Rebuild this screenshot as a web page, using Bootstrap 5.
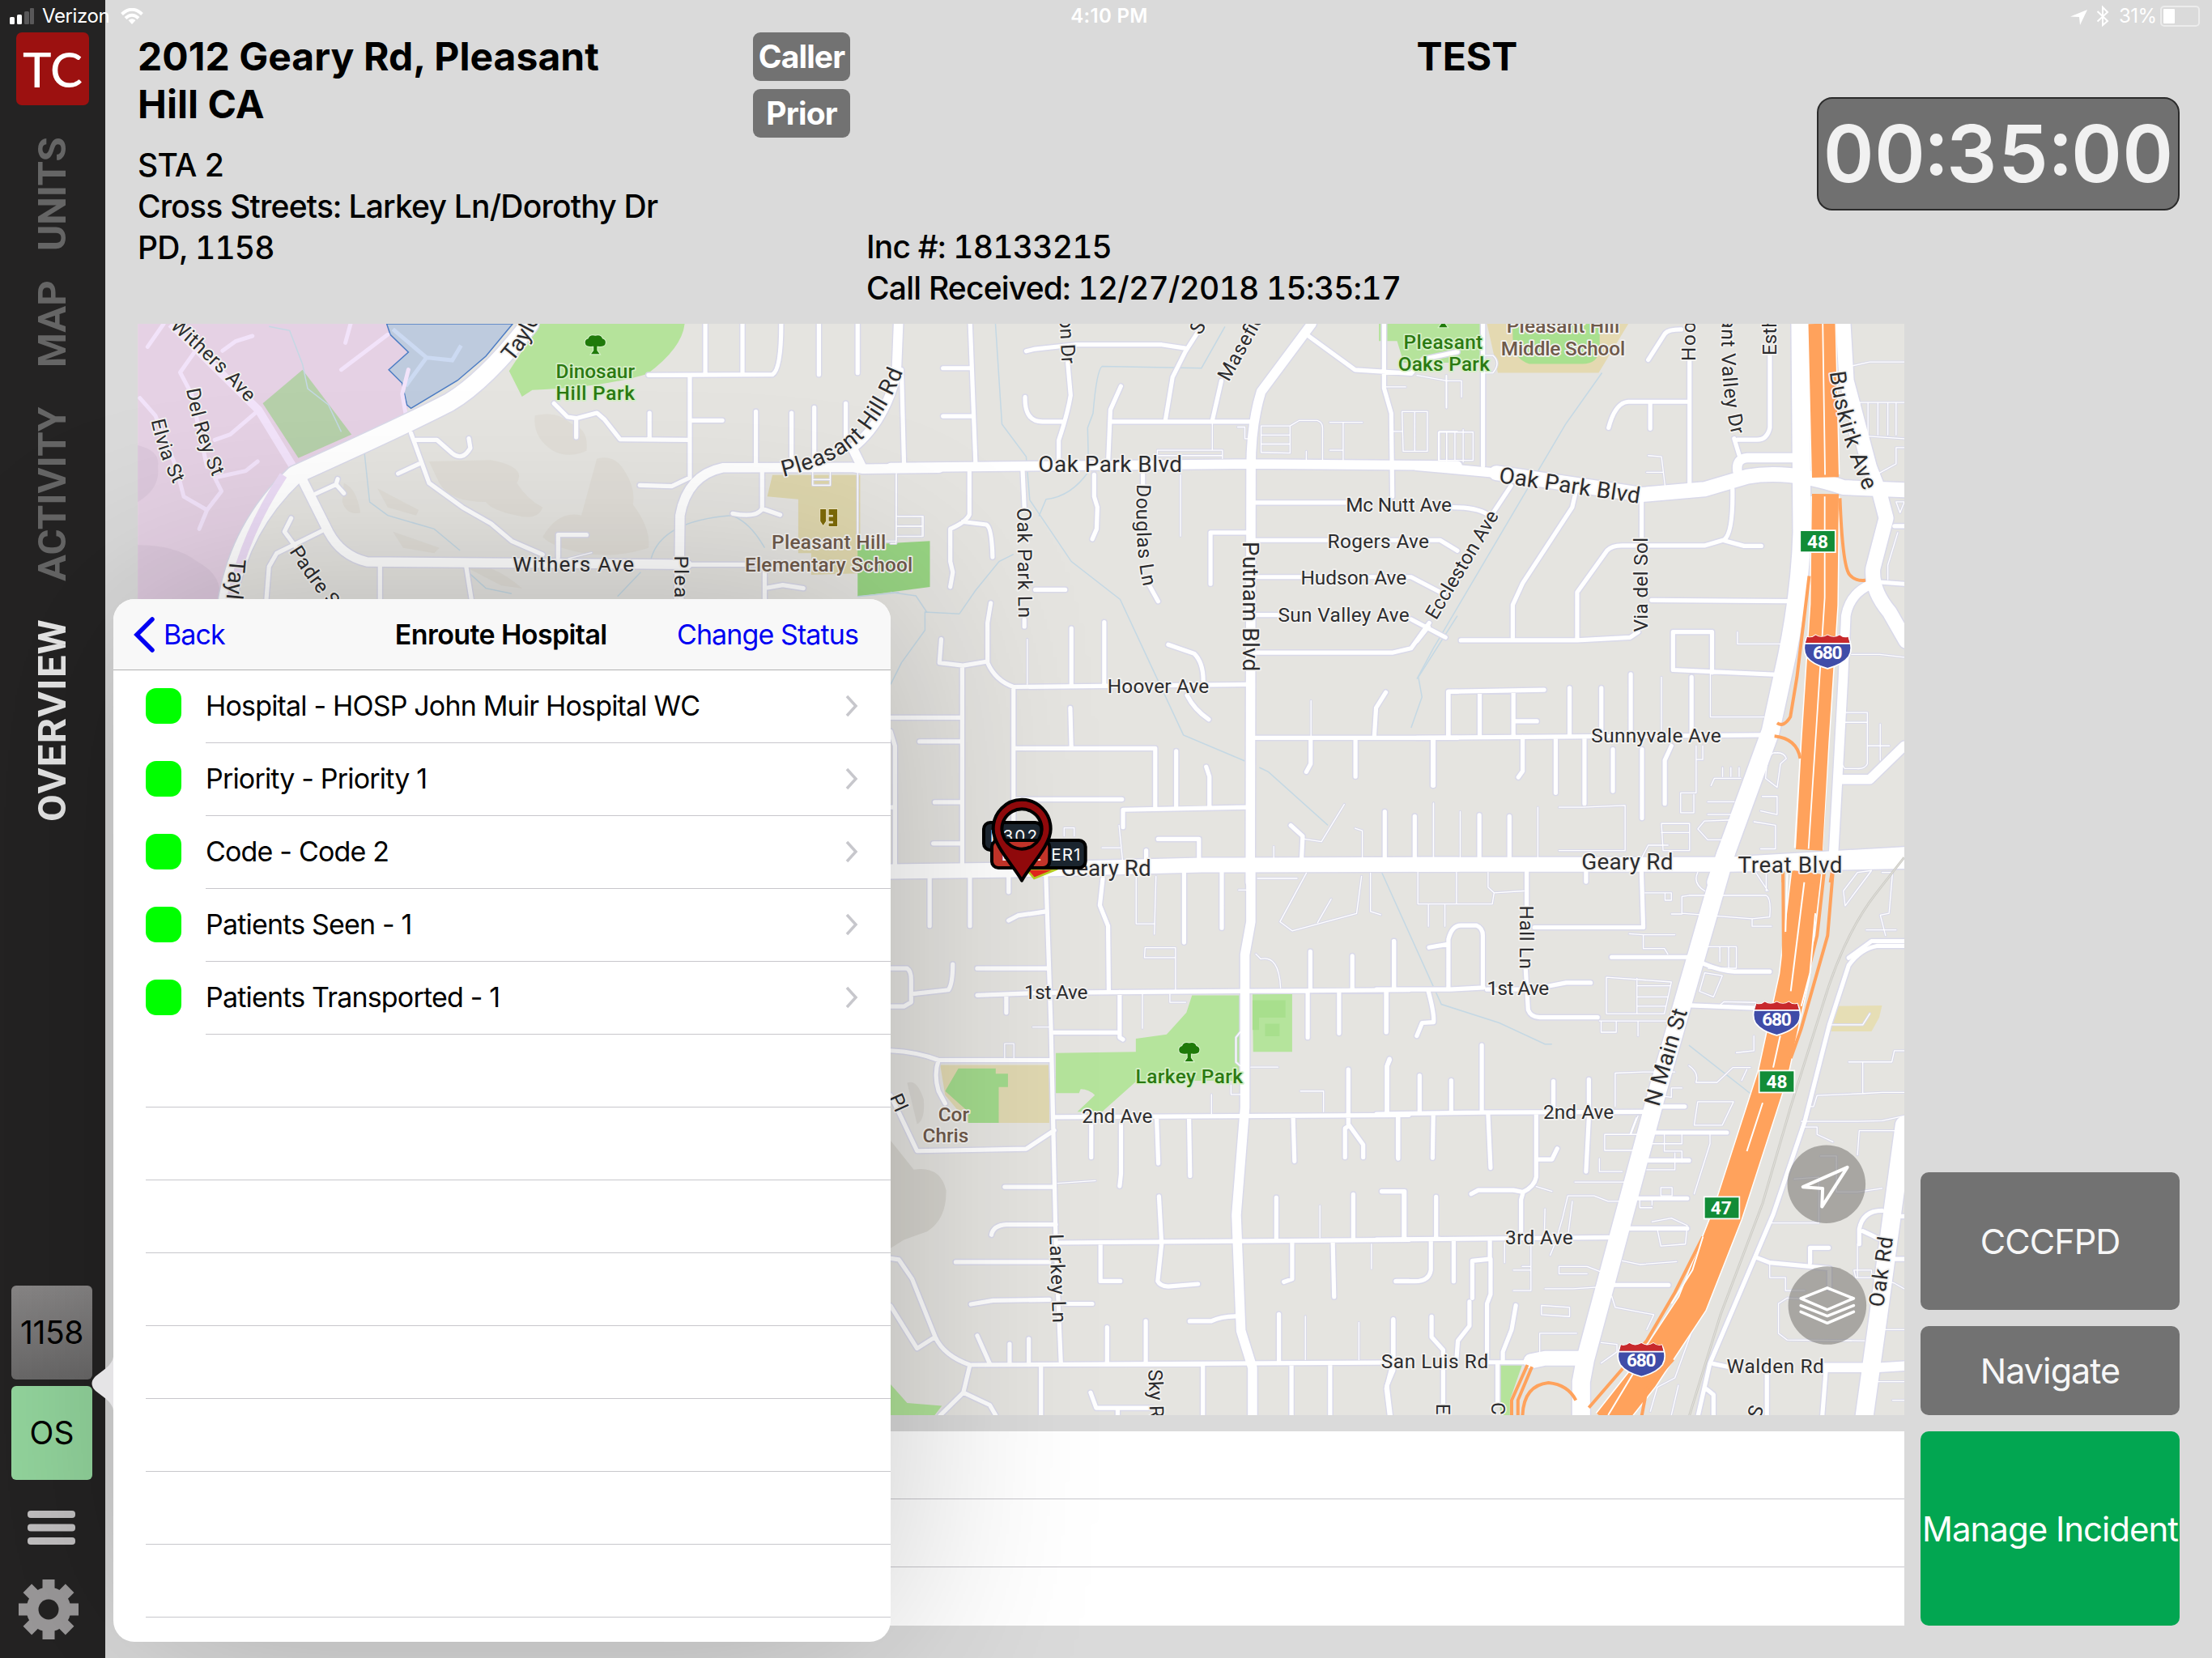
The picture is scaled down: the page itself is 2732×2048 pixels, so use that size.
<!DOCTYPE html>
<html lang="en">
<head>
<meta charset="utf-8">
<title>Incident Overview</title>
<meta name="viewport" content="width=device-width, initial-scale=1">
<link href="https://cdn.jsdelivr.net/npm/bootstrap@5.3.0/dist/css/bootstrap.min.css" rel="stylesheet">
<style>
body{width:2732px;height:2048px;overflow:hidden;background:#dadada;color:#000;font-family:Inter,"Liberation Sans",sans-serif}
.side{width:130px;background:#242323;padding-top:40px}
.logo{width:90px;height:90px;background:#9c1110;border-radius:7px;color:#fff;font:500 60px/90px Lato,sans-serif;text-align:center}
.vtab{writing-mode:vertical-rl;transform:rotate(180deg);font:700 49px/56px Roboto,sans-serif;color:#656565;white-space:nowrap;display:flex;justify-content:center}
.vtab.on{color:#e9e9e9;letter-spacing:1.3px}
.tile{width:100px;height:116px;border-radius:6px;font-size:39px;display:flex;align-items:center;justify-content:center;margin-right:2px}
.tile.unit{background:linear-gradient(#8a8888,#6b6a6a);letter-spacing:-.4px}
.tile.os{background:#95d89f}
.status{height:40px;color:#fff;font-size:25px;line-height:40px}
.head{height:400px;padding:40px 40px 0}
.addr{font-size:48px;font-weight:700;line-height:59px;letter-spacing:.05px}
.info{font-size:39px;font-weight:500;line-height:51px;letter-spacing:-.8px;font-feature-settings:"tnum"}
.pill{width:120px;height:60px;border-radius:9px;background:#727272;color:#fff;font-weight:700;font-size:39px;padding:0;border:0;letter-spacing:-.9px;line-height:60px}
.timer{width:448px;height:140px;border:2px solid #2b2b2b;border-radius:19px;background:#707070;color:#f1f1f1;font-weight:600;font-size:98px;line-height:136px;text-align:center;white-space:nowrap;font-feature-settings:"tnum"}
.mapbox{width:2182px;height:1348px}
.mapbox svg{display:block}
.tbl{height:240px;background:#fff}
.tbl div{height:84px;border-bottom:1px solid #c8c7cc}
.tbl div:last-child{border:0}
.act{width:320px;border:0;border-radius:10px;background:#727272;color:#f7f7f7;font-size:43px;padding:0;white-space:nowrap;letter-spacing:-.9px}
.act.go{background:#02a651;color:#fff;font-size:42px;letter-spacing:-1px}
.pop{left:140px;top:740px;width:960px;height:1288px;border-radius:26px;background:#fff;box-shadow:0 0 400px rgba(0,0,0,.22)}
.pop-head{height:88px;border-bottom:1px solid #b2b2b2;background:#f8f8f8;border-radius:26px 26px 0 0;font-size:34px}
.pop-head span{letter-spacing:-.6px}
.blue{color:#0000f2}
.item{height:90px;padding-left:40px}
.dot{width:44px;height:44px;border-radius:13px;background:#00ff00;margin:0 30px 2px 0}
.cell{height:90px;border-bottom:1px solid #c8c7cc;font-size:34px;padding:0 39px 2px 0;letter-spacing:-.82px}
.blank{height:90px;margin-left:40px;border-bottom:1px solid #c8c7cc}
.tail{left:-27px;top:936px}
/* map */
#roads path,#streams path,#hw path,.ns{vector-effect:non-scaling-stroke}
#roads path{fill:none;stroke-linecap:round;stroke-linejoin:round}
.casing{stroke:#d9d9e9;--c:3px}
.fillr{stroke:#fff;--c:0px}
.xs{stroke-width:calc(1.3px + var(--c) * .7)}
.s{stroke-width:calc(5.2px + var(--c))}
.m{stroke-width:calc(11.5px + var(--c))}
.l{stroke-width:calc(18px + var(--c))}
.xl{stroke-width:calc(22px + var(--c))}
.lb text{font-family:Roboto,"Open Sans",sans-serif;font-size:14px;fill:#2c2c2e;stroke:#f3f2f0;stroke-width:2px;paint-order:stroke;stroke-linejoin:round}
.lb .big{font-size:16px}
.lb .gr{fill:#2b7a12;font-weight:500;stroke:#d5efc5}
.lb .br{fill:#6f5a4b;font-weight:500}
.lb .sh text,.lb .ex text{fill:#fff;stroke:none;font-size:13px;font-weight:700;text-anchor:middle}
</style>
<script src="https://cdn.jsdelivr.net/npm/bootstrap@5.3.0/dist/js/bootstrap.bundle.min.js"></script>
</head>
<body class="position-relative">
<div class="d-flex h-100">
  <nav class="side d-flex flex-column align-items-center flex-shrink-0">
    <div class="logo">TC</div>
    <div class="vtab" style="height:140px;margin-top:40px">UNITS</div>
    <div class="vtab" style="height:104px;margin-top:38px">MAP</div>
    <div class="vtab" style="height:216px;margin-top:50px">ACTIVITY</div>
    <div class="vtab on" style="height:248px;margin-top:48px">OVERVIEW</div>
    <div class="mt-auto tile unit">1158</div>
    <div class="tile os mt-2">OS</div>
    <svg width="60" height="44" viewBox="0 0 60 44" style="margin:37px 3px 0 0"><g fill="#c4c2c3"><rect y="1" width="59" height="9" rx="4"/><rect y="17.500" width="59" height="9" rx="4"/><rect y="34" width="59" height="9" rx="4"/></g></svg>
    <svg width="74" height="74" viewBox="-37 -37 74 74" style="margin:42px 10px 23px 0"><g fill="#9c9a9b"><path id="tooth" d="M-7.500-37h15v74h-15z"/><use href="#tooth" transform="rotate(45)"/><use href="#tooth" transform="rotate(90)"/><use href="#tooth" transform="rotate(135)"/><circle r="27.500"/></g><circle r="12.500" fill="#242323"/></svg>
  </nav>
  <main class="flex-grow-1">
    <header class="head d-flex align-items-start">
      <div style="width:760px">
        <div class="addr">2012 Geary Rd, Pleasant<br>Hill CA</div>
        <div class="info" style="padding-top:20px">STA 2<br>Cross Streets: Larkey Ln/Dorothy Dr<br>PD, 1158</div>
      </div>
      <div style="width:140px">
        <div class="d-flex flex-column" style="gap:10px"><button class="btn pill">Caller</button><button class="btn pill">Prior</button></div>
        <div class="info text-nowrap" style="padding:109px 0 0 140px">Inc #: 18133215<br>Call Received: 12/27/2018 15:35:17</div>
      </div>
      <div class="addr text-center" style="width:600px;margin-left:442px">TEST</div>
      <div class="timer ms-auto" style="margin-top:80px;margin-left:-60px">00:35:00</div>
    </header>
    <div class="d-flex" style="padding-left:40px;gap:20px">
      <div>
        <div class="mapbox">
<svg width="2182" height="1348" viewBox="170 400 2182 1348">
<defs>
<g id="roads">
 <g transform="translate(160,390) scale(.63776,.33333)">
  <path class="xs" d="M1323,570V628H1357V570M1323,607H1357M1410,570V850M1485,580V835H1460M1485,743H1535V818H1485M1485,780H1535M895,878L850,900"/>
  <path class="s" d="M375,795L285,880 270,930 265,1050M313,750L300,800 325,865M360,660L400,625 403,605M400,625L415,658M545,435L580,620 645,710 700,770 740,835 800,885M555,460L595,460 625,510Q645,540 660,490L657,455M520,585L565,545M822,325L848,375 865,380 905,360 920,385 950,458 1085,460M865,380V450M1007,360V455M1085,228V600M1005,220L1245,218Q1262,200 1262,30M1115,30V215M1187,30V215M1335,30V218M1410,30V212M1090,388H1148M1213,355V560M1282,360V545M1326,340V540M1387,325V490M1495,200L1500,560M988,628L1050,632 1085,600M1225,580V715L1260,738M1225,715Q1215,750 1168,733M830,895V812H885M485,930V1050M652,930L662,1050M1230,930V1050M1235,1008L1265,998 1305,1010M1080,922H1230"/>
  <path class="m" d="M330,590L385,800Q410,890 460,912L1080,922M1064,1050L1066,740Q1080,590 1150,563L1400,562 1420,568 1568,565M1489,30L1485,220Q1460,400 1400,490L1420,568"/>
  <path class="xl" d="M775,30Q690,240 620,320Q540,400 320,590Q215,780 190,1050"/>
 </g>
 <g transform="translate(1100,390) scale(.44643)">
  <path class="xs" d="M15,440V630H0M20,555H90V610H20M20,582H90M378,895V1020M738,395V372H918V395M738,387H918M802,440V610M890,295V372M960,308H980V340H1000M1025,305H1105V380L1025,378ZM1025,330H1105M1025,355H1105M1105,305L1130,290H1180Q1195,295 1195,310V400M1215,295H1305M1252,295V400M1215,372H1252M1150,375V400M1370,197H1425M1537,165V255M1415,265H1485V375H1418ZM1450,265V375M1390,320H1415M1568,320H1518V400M1538,325V405M480,1440V1417H508V1440M585,1472H635M632,1410L642,1510M1145,1448L1192,1455 1255,1352M1285,1418L1305,1425V1500M1060,1468V1500M1163,1065V1165M1502,1348V1500"/>
  <path class="s" d="M220,22L235,410M145,145H220M145,278H225M375,98L400,92 510,80H750L815,90M850,45L815,100 780,170 760,290M490,130L498,220Q490,270 465,345V400M372,225Q370,293 420,293H480M637,195L608,260 602,400M608,293H995M915,180L890,290M1155,55L1285,150 1440,160 1475,120 1568,100M1365,22V200L1385,270 1388,500M218,425V550Q210,570 165,590V680L172,710 165,750M200,570L265,578Q280,585 282,668M365,425L370,530M370,840V860M563,440V500L572,530 570,590 558,618M698,440V470M715,745L740,790M1010,517H1260M985,600H885V742M1010,621H1520L1568,650M1010,723H1440L1530,770M1010,828H1070M1440,840L1535,890M1010,932H1390L1440,920 1490,850M400,758H483M500,865V1020M591,848V1020M277,795L268,850V960Q290,1010 340,1027L990,1020M140,895L135,960 200,968 265,957M198,970V1538M340,1027V1538M768,910L840,935Q865,960 865,1010M820,1050Q840,1090 880,1117M0,1112H195M80,1178H195M497,1085L500,1195M340,1197H732V1360M790,1205V1360M873,1248L882,1275V1360M340,1338H640M643,1415V1367L985,1360M122,1346H195M118,1460H195M740,1448H853V1510M0,1150L12,1190V1538M0,1360H12M1010,1168H1568M1162,1168V1240L1150,1262M1286,1170V1275M1502,1170V1300M1370,1042L1343,1085 1338,1165M1543,1168V1040H1568M1107,1410L1140,1440 1137,1500M1367,1372V1500M1450,1385V1500M707,1480V1510"/>
  <path class="m" d="M0,420L990,410 1568,415M1165,22L1025,210Q997,300 997,420L995,1568"/>
  <path class="l" d="M0,1538L350,1533 860,1520 1568,1518"/>
 </g>
 <g transform="translate(1750,390) scale(.40816,.44643)">
  <path class="xs" d="M0,165L90,180H135V225M90,165V255M200,110H230Q255,130 230,158H200M65,400V322H170V400ZM90,322V400M115,322V400M140,315V405M700,387L740,390 752,480M695,433H745M970,875V908H1100M888,980V1110H1050M740,1000V1160M1310,240H1475M1310,240V330L1475,340M1340,240V330M1365,240V330M1395,240V330M1425,240V330M1450,240V330M1310,140L1370,128H1475M1390,440L1450,410V365H1475M1315,937H1400L1475,945M1280,1098H1363V1240Q1355,1255 1330,1253H1295Q1280,1240 1280,1190M1280,1125H1363M1365,1190H1430M1402,1130V1230M1450,515H1475L1462,545ZM1455,600L1425,690V730M50,1350V1500M131,1372V1500M366,1360V1500M430,1360H500L630,1355V1480H430M890,1300L900,1280H980M925,1250V1275M950,1250V1275M975,1250V1275M845,1190V1320H798V1375H838V1325M865,1190V1228H845M880,1345H960M880,1380H960M740,1405H825V1480H745ZM740,1430H825M850,1420L870,1398 960,1395M850,1420L880,1450 950,1450M680,1500L700,1465H760M1090,1210Q1060,1200 1055,1280L1090,1305 1100,1240 1118,1225Q1110,1205 1080,1210M1045,1330H1090V1380L1040,1370M1020,1400L1085,1410V1475H1040"/>
  <path class="s" d="M200,22V415M825,125V470M580,310Q600,240 640,238H820M706,240V312M700,122L750,50Q760,38 800,38M1068,100V310Q1060,343 1030,343H970M960,340L975,385M285,470L220,560M35,860L0,900M110,530Q180,530 215,550M480,490L470,530 320,740 290,800V890M133,898H485L645,890 670,875M485,895V765L575,650Q590,636 620,636H870L930,620Q957,600 955,480M930,622L990,637H1042M680,510V615M710,787L1125,790M775,980V875H893V987M775,980L1090,993M0,1168L1060,1160M95,1165V1040L385,1035M190,1040V1160M292,1040V1160M292,1122H363M462,1030V1160M558,1030V1160M647,992V1160M831,1000V1155M48,1175V1300M320,1165V1260L307,1277M420,1165V1320M507,1165V1350M593,1200V1315M681,1200V1390M770,1190L750,1230V1350M189,1382V1500M280,1385V1500M1400,737L1475,742M1445,582H1475"/>
  <path class="m" d="M970,430Q965,395 1000,393H1140M0,415L240,435M1370,745Q1310,770 1298,830L1290,1000 1260,1500M1275,1283H1370L1475,1190"/>
  <path class="l" d="M240,435L680,495 870,480 1000,445Q1130,425 1290,475L1475,482M1290,22L1300,180 1370,420 1400,490 1420,560 1380,700Q1375,760 1430,820L1480,900M0,1518L940,1518 1475,1490M940,1518L1475,1510"/>
  <path class="xl" d="M1160,22L1165,600Q1160,760 1120,940L1070,1150 930,1500 905,1568"/>
 </g>
 <g transform="translate(1100,960) scale(.40816,.5102)">
  <path class="xs" d="M743,240V355H800M803,240L798,380M770,413H862V437H768ZM862,437V515M1053,273H1080M1110,245H1230M1258,232L1178,350 1215,372 1410,330 1425,240M1333,295L1292,352M1452,232V325L1483,333M1105,428L1120,440Q1175,430 1180,510M762,522V608M845,525V545H893M430,605H480M345,685V645H373V683M1060,615L1045,630V690L1060,700M1090,702H1172M1030,745V768H1065M971,768V815M1240,760H1310V810M505,983L620,977M1299,1037V1115M1455,1130V1190M1255,1305V1410M1417,1320V1410"/>
  <path class="s" d="M118,240V360M240,240V360M357,235V278M470,240L485,600 500,1130 515,1415M357,347L385,335 470,325M642,245L633,310 658,360 660,515M888,230V400M1002,230V365M262,463H475M262,528L450,522 1568,515M350,528V570M0,463H50Q62,470 62,490V545L40,555H0M62,525L175,515Q188,500 188,453M693,520V630L703,635M495,618H685M0,662Q80,665 145,685H485M145,685Q130,720 145,760L165,790M0,770L80,905 410,900 495,855M495,823L1568,818M607,840V920M697,840V960L693,990M805,825L810,935M903,825L906,965M345,992H495M305,1108Q310,1085 350,1083H500M197,1174H480M243,1276L310,1267 480,1265M530,1275H610M510,1127L1568,1120M635,1127V1220H695M812,1015L820,1130 808,1220Q815,1232 840,1233L930,1227M905,1317H970Q1000,1305 1045,1305M0,1165L25,1168 65,1215 135,1355Q160,1400 240,1423L1568,1417M0,1280L80,1383 135,1355M240,1423L220,1490 150,1545M220,1490L300,1520 318,1545M262,1352L300,1420M360,1372V1420M418,1360V1420M655,1332V1420M772,1317V1420M455,1425V1545M945,1420V1545M1213,1420V1545M1330,1420V1545M605,1490L622,1527H790M687,1527V1545M1270,422V515M1397,433V515M1523,397V515M1262,520V630M1357,520V620M1500,520V615M1218,825L1222,930M1385,708V840L1430,890V920M1385,845L1375,850V920M1510,685L1502,700V815M1535,825V920M1167,1018V1115M1400,1010V1115M1487,1003H1553V1115M1215,1125V1215L1190,1222M1338,1125L1342,1258M1530,1220H1568M1175,1300V1415M1521,1315V1415L1500,1480 1510,1545"/>
  <path class="m" d="M1090,200V350L1072,430V800L1046,1060 1060,1340 1095,1430V1548"/>
 </g>
 <g transform="translate(1700,1050) scale(.43367,.45918)">
  <path class="xs" d="M118,60V145H330L335,115 420,110M228,60V145M318,60V100L335,115M148,148V205M195,148V205M765,115H840V135H822V115M870,125L890,122H1110Q1125,130 1120,180L1070,185 870,170ZM840,172H870M1070,185V205H1125M720,225L760,228V265H820L830,280M760,228H850M945,260H1025V318H945M978,260V300M1003,260V318M655,342L840,355 820,440H655ZM742,345V440M742,365H835M742,395H830M742,420H825M635,460H840M640,460V490H683V460M745,460V500M920,380L935,330 985,338 960,395ZM1080,60L1115,110M1110,60V110M915,60Q900,90 935,110M975,420L990,408 1080,410M1075,540L1025,545M1075,540V500M680,690V600L760,597H850M890,580Q920,600 910,625H970L1015,585H1065M1040,620L1055,590M915,677H1017L985,740H905ZM800,660L840,665V640H870M745,715L725,765M722,765L740,720M650,765H760M650,765V808H760M780,790H870V765M820,765V810H870V840M635,830V865H700M565,893H710M770,860H850V815M950,765V790L905,925M810,908H842V930H810ZM785,955V940H750V962H785M545,930H620L660,945H710M545,930L530,990 510,1055 495,1090M480,965L478,1040M558,945L545,1040M455,905L500,918M365,1055V1110M440,1050V1185H390M390,1130H440M415,1120H440M700,1105L750,1115 855,1107M520,1120H600L640,1135M520,1120V1140H600M480,1180H560L640,1175M785,1000L840,990 885,1010 880,1060 810,1065 800,1020M470,1225L550,1230 550,1255 470,1250ZM670,1200L680,1230 790,1250 770,1290M640,1325L685,1330V1350L640,1380M570,1300H465V1370M1290,470H1385L1405,440M1345,570H1468L1475,540H1503M1385,570V655L1440,652H1503M1230,690H1245L1255,660 1385,655M1210,730H1370L1440,728 1503,715M1210,745H1255V765L1300,785M1503,770L1475,755H1375L1370,820M1265,823H1310V920H1370L1440,910M1120,1003H1260V880L1190,885M1120,1110V1150H1165V1185H1220M1145,1220L1170,1205 1230,1208M1145,1220V1300L1170,1318 1390,1320M1370,1060V1150M1360,1130H1410V1150H1365ZM1430,1290H1503M1425,1430H1503M1470,1480H1503M1410,1150L1475,1165 1503,1180M780,1510L800,1445 850,1420 900,1290M860,1440L840,1520M1335,150L1330,110 1370,60 1410,55ZM1440,60H1470L1460,170 1435,175 1450,230M1395,215H1480"/>
  <path class="s" d="M50,245V370M0,375H210L305,370M315,375H440L540,357H610M205,370V240Q215,203 240,203H285Q303,210 303,230V370M205,253L150,262M428,60V150M425,320L432,430Q440,450 465,450H630M450,208H760L755,60M597,60V85M670,288H890M930,305Q980,325 1020,327H1120M28,380V490M148,380Q165,440 163,463L130,465 115,500M895,418L1080,425M300,525V705M123,607V705M213,620V705M37,562L30,580V705M0,710L300,706 780,704M62,710V830M162,710L160,828M318,710L325,855M455,710V880Q450,905 418,920L412,940V1030M418,920L390,915H290L270,925M460,832H500L515,803M605,617V720L597,865M504,622V700M800,690H878M785,760H998M765,835H890M745,937H885M720,1018H885M675,1170H832M0,1048L680,1042M15,918H80V1045M170,933V1040M155,1050V1130Q150,1160 110,1160H55M220,1050V1160M323,1050V1100L273,1105V1205M325,1100V1195L315,1220V1370M265,1215V1280L232,1320 228,1370M48,1262V1400L30,1440 40,1520M157,1255V1310L190,1345V1490M397,1225L385,1290 360,1350V1370M345,1380V1490M1503,258H1425Q1380,265 1345,310L1290,470 1220,730 1130,980 950,1380 915,1525M1503,245H1410L1345,290M960,1382L1000,1390M315,1378H440M1080,1095L1120,1110 1290,1125V1180M1235,1110V1070H1288M1375,1060V1020Q1385,970 1440,970M1385,1025L1430,1045M1280,1400L1270,1520M1112,1400V1520M940,1450L960,1465V1520M1470,1100H1503M1480,985H1503"/>
  <path class="m" d="M1275,1392H1430L1503,1388"/>
  <path class="l" d="M440,1375L480,1367H590"/>
  <path class="xl" d="M995,10L800,650 595,1370 583,1430V1520M1503,740L1430,1250 1390,1520"/>
 </g>
</g>
<g id="shield"><path d="M-14.500-9.500q3,1.200 6,-1.300q4,2.800 8.500,0q4.500,2.800 8.500,0q3,2.500 6,1.300q4,8 .5,14q-4,5.500-15,8.500q-11-3-15-8.500q-3.500-6 .5-14z" fill="#3f4ca8" stroke="#fff" stroke-width="1"/><path d="M-14.500-9.500q3,1.200 6,-1.300q4,2.800 8.500,0q4.500,2.800 8.500,0q3,2.500 6,1.300l1,4.200h-31z" fill="#c8292c"/><path d="M-16-4.800h32" stroke="#fff" stroke-width="1"/></g>
<g id="tree"><path d="M0-7q4-1 5,2q3,1 2,4q-1,2-5,1.500l-.8,0v3l1.800,2.500h-6l1.800-2.500v-3l-.8,0q-4,.5-5-1.500q-1-3 2-4q1-3 5-2z" fill="#1f7a0a" stroke="#d9f2cc" stroke-width="1.200" paint-order="stroke"/></g>
<path id="p1" d="M120,232Q155,262 180,291"/><path id="p2" d="M132,276Q138,310 152,341"/><path id="p3" d="M107,298Q113,325 124,345"/>
<path id="p4" d="M363,257Q377,241 386,218"/><path id="p5" d="M555,338Q598,328 616,306Q632,285 641,261"/><path id="p6" d="M1297,264Q1302,305 1322,350"/>
<path id="p7" d="M205,391Q218,412 238,436"/><path id="p8" d="M1221,225Q1218,270 1228,310"/><path id="p9" d="M721,360L722,439"/><path id="p10" d="M806,343Q804,390 811,418"/>
</defs>
<rect x="170" y="400" width="2182" height="1348" fill="#e5e4e0"/>
<!-- terrain, districts and parks -->
<g transform="translate(160,390) scale(.63776,.33333)">
 <g fill="#dcd9d1" opacity=".6"><path d="M580,540L700,535Q770,560 750,620Q770,680 800,710Q790,760 750,740Q700,720 690,690Q620,690 600,620ZM785,370Q830,350 855,400Q890,420 885,500Q850,530 820,500Q780,450 785,370ZM905,530Q940,510 960,580Q980,640 975,700Q1010,790 1005,860Q940,900 880,880Q820,860 800,820Q830,720 875,740ZM415,620Q440,640 447,730Q420,740 412,690ZM480,640L560,720 555,740 500,710ZM510,800L600,860 590,880 530,860ZM640,920Q700,910 760,1010L720,1000Z"/></g>
 <path fill="#e5d1e4" d="M16,30H498L505,70 540,135 502,200 528,250 540,340 535,370 305,575 245,780 185,950 175,1050H16Z"/>
 <g fill="#d8c4d8" opacity=".7"><path d="M16,480Q60,500 55,560Q60,640 16,690ZM16,850Q90,850 130,910Q180,960 175,1050H16Z"/></g>
 <path class="ns" fill="#becbde" stroke="#4c7cc4" stroke-width="1.500" d="M498,30H742L690,150 635,240 545,343 537,330 528,250 502,200 540,135 505,70Z"/>
 <path fill="none" class="ns" stroke="#ccdaf2" stroke-width="5" d="M510,50L575,155 625,165 642,110M575,155L535,260"/>
 <path fill="#b6d0aa" d="M335,200L430,440 327,527 258,325Z"/>
 <path fill="#b5e39b" d="M795,30H1075Q1070,120 1003,215Q920,265 780,275L760,300 735,205Z"/>
 <path fill="#ded6ad" d="M1245,590L1415,590V955L1320,960V880H1295V680L1235,670Z"/>
 <path fill="#98d483" d="M1410,850L1550,835V1005L1410,1040Z"/>
 <path class="ns" fill="none" stroke="#f2e3fa" stroke-width="5" stroke-linecap="round" stroke-linejoin="round" d="M20,305L50,370 90,560 105,670 150,720 135,790M150,720L178,650 165,600 225,575 248,540M165,460L195,440 250,350M150,560L120,290 98,210 135,110M180,130L205,95 238,75M66,30L35,115M428,30L418,100M500,70L410,200M535,365L528,290 540,200"/>
 <path class="ns" fill="none" stroke="#f2e3fa" stroke-width="10" d="M80,30L250,350 320,570"/>
</g>
<g transform="translate(1750,390) scale(.40816,.44643)">
 <path fill="#b5e39b" d="M-115,22H197V130H-40L-60,70H-115Z"/><path fill="#e4d9b1" d="M212,22H640L550,158H245Z"/><path fill="#a9e08f" d="M290,22H553V90Q550,133 500,133H340Q290,120 290,60Z"/>
</g>
<g transform="translate(1100,960) scale(.40816,.5102)">
 <path fill="#d6d4ce" d="M0,880L70,950Q150,940 168,1000Q170,1070 110,1100L40,1120 0,1140Z"/><path fill="#dad8d3" d="M50,740Q80,730 100,780Q105,830 80,840Z"/>
 <path fill="#e0d8b1" d="M150,697H480V837H235L165,770Z"/><path fill="#a2d98c" d="M205,705H318V718H355V750H327V837H235V810L165,760Z"/>
 <path fill="#b5e49c" d="M500,668L742,665V633L835,623 895,570 912,528H1060V735H745L640,810H565L618,770Q600,755 575,755L570,765H500ZM1095,523H1215V665H1097Z"/><path fill="#a8df8d" d="M1095,540H1195V582H1115V612H1095ZM1133,597H1177V627H1133Z"/>
 <path fill="#b0e298" d="M0,1470L50,1515 155,1522 130,1548H0Z"/>
</g>
<g transform="translate(1700,1050) scale(.43367,.45918)">
 <path fill="#b5e39b" d="M352,1385H415L380,1480V1520H352Z"/><path fill="#e6deb5" d="M1310,420L1440,418 1432,450 1410,488H1290Z"/>
</g>
<g id="streams" fill="none" stroke="#c4d8e4" stroke-width="1.500">
 <path transform="translate(160,390) scale(.63776,.33333)" d="M270,40L310,55 335,180 345,270 385,330 410,430M455,510L465,690 500,740 590,790 640,870M650,940L690,1010 740,1030M1010,900Q1030,760 1165,740Q1200,760 1230,860M990,950L945,1040M1410,1040L1490,1025"/>
 <path transform="translate(1100,390) scale(.44643)" d="M290,22L308,300 375,390 385,510 500,680 635,785 810,1160 980,1232M1020,1250L1045,1262 1210,1410M925,30L860,145 585,140Q570,150 560,270L545,310 548,430Q500,500 430,508L410,555M340,660L300,680 235,760 190,825 95,820 95,870 30,960 0,1020M0,765L70,775 100,820M1568,830L1460,1000 1470,1055 1440,1140"/>
 <path transform="translate(1750,390) scale(.40816,.44643)" d="M560,158L450,300 50,920 0,1005"/>
 <path transform="translate(1700,1050) scale(.43367,.45918)" d="M15,60L185,415 350,465 480,522H500M890,525L1065,655"/>
</g>
<use href="#roads" class="casing"/>
<use href="#roads" class="fillr"/>
<path fill="none" stroke="#ecdcf6" stroke-width="10" d="M350,587Q302,660 286,735"/>
<!-- railway and freeway -->
<g id="hw" fill="none">
 <g transform="translate(1700,1050) scale(.43367,.45918)">
  <path stroke="#cdccc6" stroke-width="3" d="M1503,20L1420,120Q1330,230 1270,420L1180,690 1100,950 980,1250 890,1525"/>
  <path stroke="#e2e1dc" stroke-width="1" d="M1503,20L1420,120Q1330,230 1270,420L1180,690 1100,950 980,1250 890,1525"/>
  <g stroke="#fff"><path stroke-width="39" d="M1225,60L1190,340 1130,600 1000,980 900,1220 760,1420 660,1540"/></g>
  <g stroke="#ffa25c"><path stroke-width="36" d="M1225,60L1190,340 1130,600 1000,980 900,1220 760,1420 660,1540"/>
  <path stroke-width="4" d="M1158,60L1160,330M1300,60L1285,230 1210,480 1180,560M1275,60L1255,230 1200,440M930,1040L850,1190 770,1320 605,1500M845,1370L770,1450 755,1525M430,1385L385,1480V1525M443,1390L403,1480V1525M416,1525Q418,1440 490,1433Q545,1438 568,1480"/></g>
  <path stroke="#fff" stroke-width="2" d="M1222,60L1180,380M1150,500L1130,585M1100,680L1055,810M930,1040L900,1130 840,1220M1250,170L1235,330 1210,420M1170,60L1165,220M730,1410L660,1520"/>
 </g>
 <g transform="translate(1750,390) scale(.40816,.44643)">
  <path stroke="#fff" stroke-width="36" d="M1225,22L1236,440M1236,500L1232,800 1205,1180 1185,1475"/>
  <path stroke="#ffa25c" stroke-width="33" d="M1225,22L1236,447M1236,493L1232,800 1205,1180 1187,1478M1180,1540L1176,1568"/>
  <path stroke="#ffa25c" stroke-width="4" d="M1280,505Q1288,690 1308,715Q1325,735 1357,732M1187,720L1150,1000 1130,1110Q1110,1140 1090,1127M1082,1163Q1150,1170 1160,1225"/>
  <path stroke="#ffa25c" stroke-width="3" d="M1107,1540V1568M1255,1540L1250,1568"/>
  <path stroke="#fff" stroke-width="1.800" d="M1228,22L1235,440M1234,500V780L1215,1050 1185,1475"/>
 </g>
</g>
<!-- labels share one scaled space -->
<g class="lb" transform="scale(1.74235)">
 <text><textPath href="#p1" textLength="77">Withers Ave</textPath></text><text><textPath href="#p2" textLength="65">Del Rey St</textPath></text><text><textPath href="#p3" textLength="48">Elvia St</textPath></text>
 <text class="big"><textPath href="#p4">Taylor</textPath></text><text class="big"><textPath href="#p5" textLength="119">Pleasant Hill Rd</textPath></text><text class="big"><textPath href="#p6" textLength="88">Buskirk Ave</textPath></text>
 <text><textPath href="#p7" textLength="50">Padre S</textPath></text><text><textPath href="#p8" textLength="84">ant Valley Dr</textPath></text><text><textPath href="#p9" textLength="78">Oak Park Ln</textPath></text><text><textPath href="#p10" textLength="73">Douglas Ln</textPath></text>
 <text class="big" transform="translate(163,396) rotate(95)">Taylor</text>
 <text transform="translate(478,394) rotate(90)" textLength="60">Pleasant</text>
 <text x="363.500" y="405" style="font-size:15px" textLength="86">Withers Ave</text>
 <text x="736" y="334.500" class="big" textLength="102">Oak Park Blvd</text>
 <text class="big" transform="translate(1062,342) rotate(8.500)" textLength="101">Oak Park Blvd</text>
 <text class="big" transform="translate(881,384) rotate(90)" textLength="92">Putnam Blvd</text>
 <text x="954" y="362.500" textLength="75">Mc Nutt Ave</text><text x="941" y="388.500" textLength="72">Rogers Ave</text><text x="922" y="414.500" textLength="75">Hudson Ave</text><text x="906" y="441" textLength="93">Sun Valley Ave</text>
 <text transform="translate(1018,440) rotate(-59)" textLength="87">Eccleston Ave</text>
 <text transform="translate(1168,448) rotate(-90)" textLength="67">Via del Sol</text>
 <text x="785" y="491.500" textLength="72">Hoover Ave</text><text x="1128" y="526.500" textLength="92">Sunnyvale Ave</text>
 <text class="big" x="752" y="621" textLength="64">Geary Rd</text><text class="big" x="1121" y="616.500" textLength="65">Geary Rd</text><text class="big" x="1232" y="619" textLength="74">Treat Blvd</text>
 <text transform="translate(1077,642) rotate(90)" textLength="45">Hall Ln</text>
 <text x="726" y="708" textLength="45">1st Ave</text><text x="1054" y="705.500" textLength="44">1st Ave</text><text x="767" y="796" textLength="50">2nd Ave</text><text x="1094" y="793" textLength="50">2nd Ave</text><text x="1067" y="882" textLength="48">3rd Ave</text>
 <text class="big" transform="translate(1176,785) rotate(-73.500)" textLength="71">N Main St</text>
 <text style="font-size:15px" transform="translate(1335,927) rotate(-82)" textLength="50">Oak Rd</text>
 <text transform="translate(744,875) rotate(88)" textLength="63">Larkey Ln</text>
 <text transform="translate(814,971) rotate(88)" textLength="42">Sky Rd</text>
 <text x="979" y="970" textLength="76">San Luis Rd</text><text x="1224" y="973.500" textLength="69">Walden Rd</text>
 <text transform="translate(751,225) rotate(87)">on Dr</text>
 <text transform="translate(871,271) rotate(-61)" textLength="64">Masefield</text><text transform="translate(851,238) rotate(-60)">S</text>
 <text transform="translate(1202,256) rotate(-90)" textLength="36">Hook</text><text transform="translate(1259,252) rotate(-90)">Esther</text>
 <text transform="translate(1018,995) rotate(90)">El</text><text transform="translate(1057,994) rotate(90)">C</text><text transform="translate(1248,1006) rotate(-75)">S</text>
 <text transform="translate(630,778) rotate(66)">Pl</text>
 <text class="gr" x="394" y="268" textLength="56">Dinosaur</text><text class="gr" x="394" y="283.500" textLength="56">Hill Park</text><text class="gr" x="995" y="247.500" textLength="56">Pleasant</text><text class="gr" x="991" y="263" textLength="65">Oaks Park</text><text class="gr" x="805" y="768" textLength="76">Larkey Park</text>
 <text class="br" x="547" y="389" textLength="81">Pleasant Hill</text><text class="br" x="528" y="405" textLength="119">Elementary School</text>
 <text class="br" x="1068" y="236" textLength="80">Pleasant Hill</text><text class="br" x="1064" y="252" textLength="88">Middle School</text>
 <text class="br" x="665" y="795">Cor</text><text class="br" x="654" y="810">Chris</text>
 <use href="#tree" x="422" y="245"/><use href="#tree" x="843" y="746.500"/><use href="#tree" x="1023" y="226"/>
 <path fill="#7d6a08" stroke="#f1e9c8" stroke-width="1" paint-order="stroke" d="M581.500,361h4v8.500l-2,3-2-3zM587.500,361h6v12h-6v-2h3v-1.500h-3v-3h3v-1.500h-3z"/>
 <g class="sh"><use href="#shield" x="1295.500" y="461"/><text x="1295.500" y="467" textLength="21">680</text><use href="#shield" x="1259.500" y="721"/><text x="1259.500" y="727" textLength="21">680</text><use href="#shield" x="1163.500" y="963"/><text x="1163.500" y="969" textLength="21">680</text></g>
 <g class="ex" fill="#128c37" stroke="#fff"><rect x="1276" y="376" width="25" height="15.500"/><rect x="1247" y="759" width="25" height="15.500"/><rect x="1208" y="848.500" width="25" height="15.500"/><text x="1288.500" y="388.300">48</text><text x="1259.500" y="771.300">48</text><text x="1220" y="860.800">47</text></g>
 <!-- map controls -->
 <g fill="#777572" fill-opacity=".56"><circle cx="1294.700" cy="839.500" r="27.700"/><circle cx="1295.300" cy="925.500" r="27.700"/></g>
 <g fill="none" stroke="#fff" stroke-width="2.300" stroke-linejoin="round" stroke-linecap="round"><path d="M1309.500,827.500L1278,841.500 1292,842.500 1291.500,855.500Z"/><path stroke-width="2" d="M1295.300,913L1314,920.500 1295.300,928.500 1276.500,920.500ZM1276.500,925.500L1295.300,933 1314,925.500M1276.500,930L1295.300,938 1314,930"/></g>
</g>
<!-- unit markers -->
<g transform="translate(1180,960) scale(.33333)" font-family="Inter,sans-serif" font-size="62">
 <path d="M262,340L292,375 378,340Z" fill="#e3261c" stroke="#b6cf22" stroke-width="8"/>
 <rect x="105" y="168" width="215" height="102" rx="24" fill="#1c2630" stroke="#000" stroke-width="12"/><text x="128" y="240" fill="#fff" textLength="175">K302</text>
 <rect x="270" y="234" width="212" height="102" rx="24" fill="#1c2630" stroke="#000" stroke-width="12"/><text x="355" y="309" fill="#fff" textLength="108">ER1</text>
 <rect x="135" y="234" width="214" height="102" rx="24" fill="#c5352a" stroke="#000" stroke-width="12"/><text x="170" y="309" fill="#fff" textLength="150">E302</text>
 <path fill-rule="evenodd" fill="#930a0c" stroke="#000" stroke-width="12" stroke-linejoin="round" d="M246,383C222,335 140,255 140,192A106,108 0 0 1 353,192C353,255 270,335 246,383ZM246,118a74,74 0 1 0 .1,0Z"/>
</g>
</svg>
        </div>
        <div class="tbl" style="margin-top:20px"><div></div><div></div><div></div></div>
      </div>
      <div class="d-flex flex-column justify-content-end" style="gap:20px">
        <button class="btn act" style="height:170px">CCCFPD</button>
        <button class="btn act" style="height:110px">Navigate</button>
        <button class="btn act go" style="height:240px">Manage Incident</button>
      </div>
    </div>
  </main>
</div>

<section class="pop position-absolute">
  <div class="pop-head d-flex align-items-center blue">
    <svg width="28" height="46" viewBox="0 0 28 46" style="margin-left:24px;margin-right:10px"><path d="M24,4L5,23 24,42" fill="none" stroke="#0000f2" stroke-width="5.500" stroke-linecap="round"/></svg>
    <span style="letter-spacing:-.9px">Back</span><span class="fw-semibold text-black" style="margin-left:210px">Enroute Hospital</span><span class="ms-auto" style="margin-right:40px;letter-spacing:-.9px">Change Status</span>
  </div>
  <div class="item d-flex align-items-center"><i class="dot"></i><div class="cell flex-grow-1 d-flex align-items-center justify-content-between">Hospital - HOSP John Muir Hospital WC<svg width="18" height="28"><path d="M3,2L14,14 3,26" fill="none" stroke="#c7c7cc" stroke-width="3.500"/></svg></div></div>
  <div class="item d-flex align-items-center"><i class="dot"></i><div class="cell flex-grow-1 d-flex align-items-center justify-content-between">Priority - Priority 1<svg width="18" height="28"><path d="M3,2L14,14 3,26" fill="none" stroke="#c7c7cc" stroke-width="3.500"/></svg></div></div>
  <div class="item d-flex align-items-center"><i class="dot"></i><div class="cell flex-grow-1 d-flex align-items-center justify-content-between">Code - Code 2<svg width="18" height="28"><path d="M3,2L14,14 3,26" fill="none" stroke="#c7c7cc" stroke-width="3.500"/></svg></div></div>
  <div class="item d-flex align-items-center"><i class="dot"></i><div class="cell flex-grow-1 d-flex align-items-center justify-content-between">Patients Seen - 1<svg width="18" height="28"><path d="M3,2L14,14 3,26" fill="none" stroke="#c7c7cc" stroke-width="3.500"/></svg></div></div>
  <div class="item d-flex align-items-center"><i class="dot"></i><div class="cell flex-grow-1 d-flex align-items-center justify-content-between">Patients Transported - 1<svg width="18" height="28"><path d="M3,2L14,14 3,26" fill="none" stroke="#c7c7cc" stroke-width="3.500"/></svg></div></div>
  <div class="blank"></div><div class="blank"></div><div class="blank"></div><div class="blank"></div><div class="blank"></div><div class="blank"></div><div class="blank"></div><div class="blank"></div>
  <svg class="tail position-absolute" width="28" height="66" viewBox="0 0 28 66"><path d="M27,0Q26,7 18,14L5,24Q-4,33 5,42L18,52Q26,59 27,66Z" fill="#e5e4e6"/></svg>
</section>

<div class="status position-absolute top-0 start-0 w-100 d-flex align-items-center">
  <svg width="30" height="20" viewBox="0 0 30 20" style="margin-left:12px"><g fill="#fff"><rect y="11" width="6" height="9" rx="1.500"/><rect x="9" y="8" width="6" height="12" rx="1.500"/></g><g fill="#595859"><rect x="18" y="4" width="6" height="16" rx="1.500"/><rect x="25" width="5" height="20" rx="1"/></g></svg>
  <span style="margin-left:10px;width:84px;font-size:24px;letter-spacing:-.4px">Verizon</span>
  <svg width="28" height="20" viewBox="0 0 28 20" style="margin-left:13px"><g fill="none" stroke="#fff" stroke-width="4"><path d="M1.500,7.500Q14-4 26.500,7.500M6,12.500Q14,5 22,12.500"/></g><path d="M14,20L9.500,15Q14,11.500 18.500,15Z" fill="#fff"/></svg>
  <span class="fw-semibold position-absolute start-50 translate-middle-x" style="font-size:24px;letter-spacing:.3px;margin-left:4px">4:10 PM</span>
  <svg class="ms-auto" width="60" height="28" viewBox="2555 6 60 28"><path d="M2576,12L2555,20.500 2566,21 2567,31Z" fill="#fff"/><path d="M2588.500,14L2601,26 2595,31V9L2601,15 2588.500,26.500" fill="none" stroke="#fff" stroke-width="2"/></svg>
  <span style="font-size:24px;width:51px;letter-spacing:-.5px">31%</span>
  <svg width="50" height="26" viewBox="0 0 50 26" style="margin-right:14px"><rect x="1" y="1" width="47" height="24" rx="4" fill="none" stroke="#ececec" stroke-width="2"/><rect x="4" y="4" width="14" height="18" rx="1" fill="#fff"/></svg>
</div>
</body>
</html>
